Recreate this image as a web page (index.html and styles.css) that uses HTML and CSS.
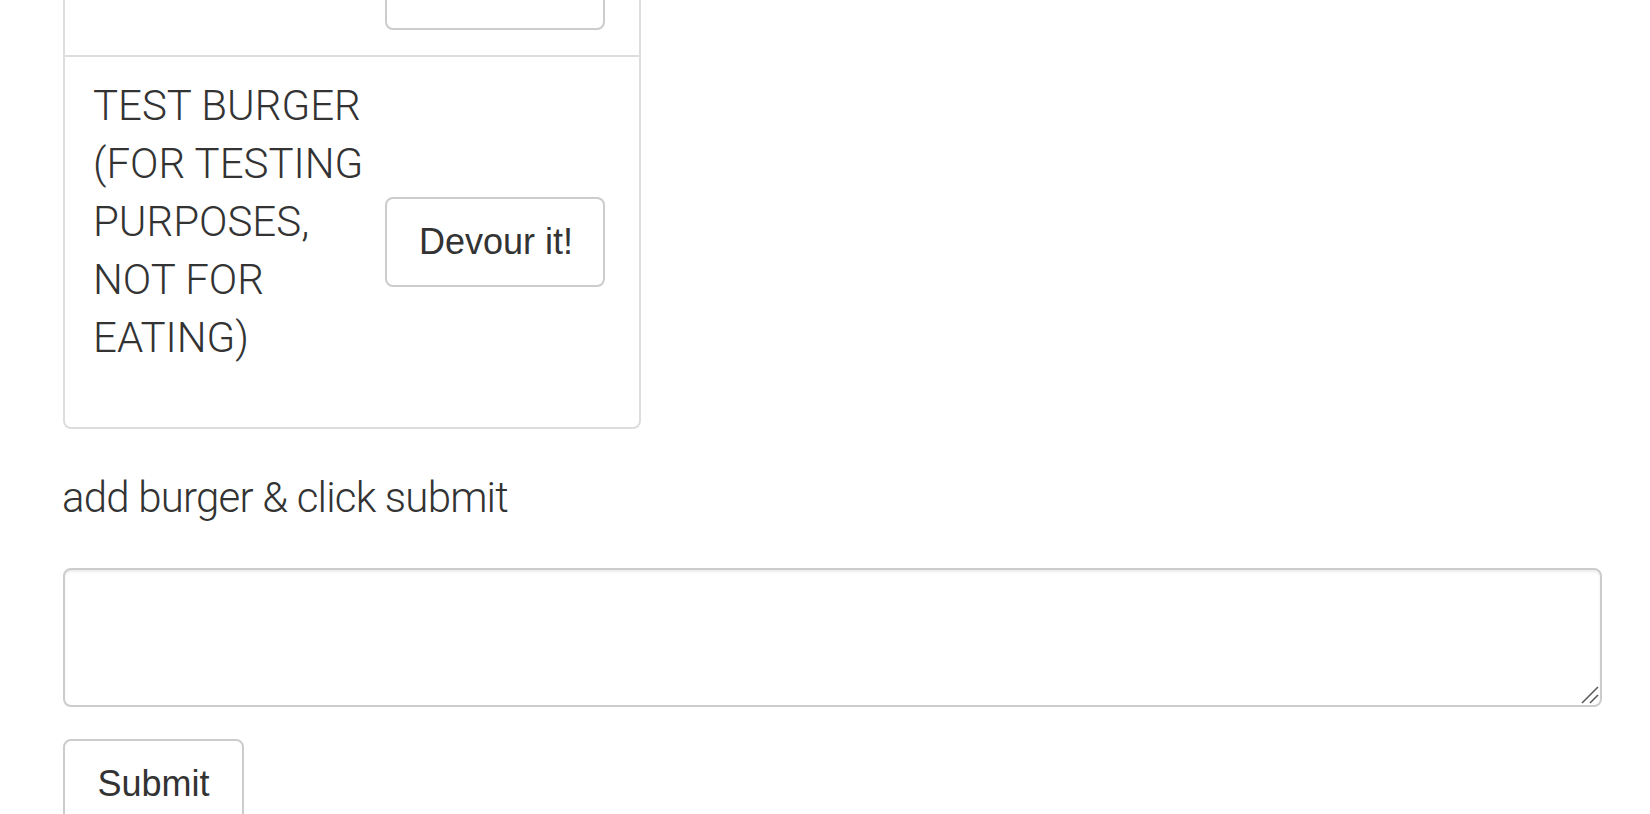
FILE: index.html
```html
<!DOCTYPE html>
<html lang="en">
<head>
<meta charset="utf-8">
<title>Burgers</title>
<link rel="stylesheet" href="styles.css">
</head>
<body>
<div class="page">
  <ul class="list">
    <li class="item">
      <p class="name">CHEESEBURGER</p>
      <button class="btn" type="button">Devour it!</button>
    </li>
    <li class="item">
      <p class="name">TEST BURGER (FOR TESTING PURPOSES, NOT FOR EATING)</p>
      <button class="btn" type="button">Devour it!</button>
    </li>
  </ul>
  <form class="form">
    <p class="lead">add burger &amp; click submit</p>
    <div class="field-wrap">
      <textarea class="field"></textarea>
      <svg class="grip" width="18" height="18" viewBox="0 0 18 18" aria-hidden="true">
        <line x1="1" y1="17" x2="17" y2="1" stroke="#5a5a5a" stroke-width="1.6"/>
        <line x1="9" y1="17" x2="17" y2="9" stroke="#5a5a5a" stroke-width="1.6"/>
      </svg>
    </div>
    <button class="btn" type="submit">Submit</button>
  </form>
</div>
</body>
</html>
```

FILE: styles.css
```css
html, body {
  margin: 0;
  padding: 0;
  background: #fff;
}

body {
  color: #333;
  font-family: "Roboto", "Liberation Sans", sans-serif;
  overflow: hidden;
}

.page {
  margin: -86px 0 0 63px;
  width: 1538px;
}

.list {
  list-style: none;
  margin: 0 0 40px;
  padding: 0;
  width: 578px;
}

.item {
  display: grid;
  grid-template-columns: 290px 220px;
  align-items: center;
  padding: 20px 30px;
  border: 2px solid #ddd;
  margin-bottom: -2px;
  background: #fff;
}

.item:first-child {
  border-radius: 8px 8px 0 0;
  padding-bottom: 21px;
}

.item:last-child {
  position: relative;
  border-radius: 0 0 8px 8px;
  margin-bottom: 0;
}

.name,
.lead {
  font-family: "Roboto", "Liberation Sans", sans-serif;
  font-weight: 300;
  font-size: 42px;
  line-height: 58px;
  margin: 0 0 40px;
}

.name {
  margin-left: -2px;
}

.lead {
  letter-spacing: -0.8px;
  margin-bottom: 41px;
  margin-left: -1px;
}

.btn {
  display: inline-block;
  box-sizing: border-box;
  white-space: nowrap;
  font-family: "Liberation Sans", Arial, sans-serif;
  font-size: 36px;
  line-height: 46px;
  padding: 20px 32px;
  color: #333;
  background: #fff;
  border: 2px solid #ccc;
  border-radius: 8px;
  cursor: pointer;
}

.item .btn {
  width: 220px;
}

.form .btn {
  width: 181px;
}

.field-wrap {
  position: relative;
  width: 1539px;
  margin: 0 0 32px;
}

.field {
  display: block;
  box-sizing: border-box;
  width: 1539px;
  height: 139px;
  margin: 0;
  padding: 12px 24px;
  border: 2px solid #ccc;
  border-radius: 8px;
  box-shadow: inset 0 2px 2px rgba(0, 0, 0, 0.075);
  font-family: "Liberation Sans", Arial, sans-serif;
  font-size: 28px;
  color: #555;
  resize: none;
}

.grip {
  position: absolute;
  right: 3px;
  bottom: 3px;
  pointer-events: none;
}
```
